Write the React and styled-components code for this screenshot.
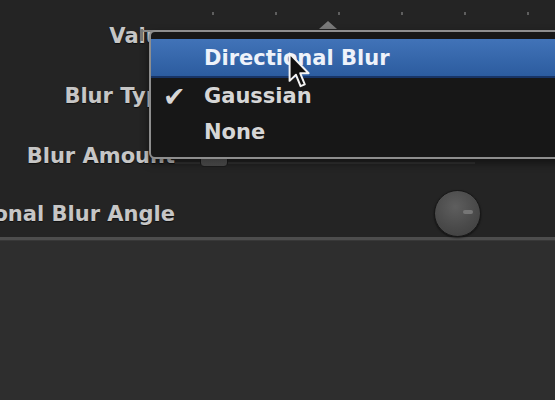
import React from 'react';
import styled, { createGlobalStyle } from 'styled-components';

const GlobalStyle = createGlobalStyle`
  html, body {
    margin: 0;
    padding: 0;
    background: #2d2d2d;
    overflow: hidden;
  }
`;

const Page = styled.div`
  position: relative;
  width: 555px;
  height: 400px;
  overflow: hidden;
  display: flex;
  flex-direction: column;
  font-family: "DejaVu Sans", "Liberation Sans", sans-serif;
  font-weight: bold;
  font-size: 21px;
`;

const Inspector = styled.div`
  padding-top: 6px;
  background: #242424;
  border-bottom: 3px solid #4d4d4d;
  height: 240px;
  box-sizing: border-box;
`;

const Row = styled.div`
  display: grid;
  grid-template-columns: 175px 1fr;
  height: ${(p) => p.h || 60}px;
  align-items: center;
`;

const Label = styled.div`
  display: flex;
  justify-content: flex-end;
  white-space: nowrap;
  color: #c6c6c6;
  text-shadow: 0 1px 1px rgba(0, 0, 0, 0.6);
`;

const Control = styled.div`
  display: flex;
  align-items: center;
  justify-content: ${(p) => p.justify || 'flex-start'};
  align-self: stretch;
  padding-right: ${(p) => p.padRight || 0}px;
`;

const ValueSlider = styled.div`
  position: relative;
  align-self: start;
  margin-left: -35px;
  width: 420px;
  padding-top: 6px;
`;

const Ticks = styled.div`
  display: flex;
  gap: 61px;
  padding-left: 72px;
  height: 3px;
`;

const Tick = styled.span`
  width: 2px;
  height: 3px;
  background: #5e5e5e;
`;

const Track = styled.div`
  position: relative;
  margin-top: 15px;
  height: 2px;
  background: #8a8a8a;
  border-left: 3px solid #9a9a9a;
  &::before {
    content: '';
    position: absolute;
    left: -3px;
    top: -1px;
    width: 3px;
    height: 12px;
    background: #777;
  }
`;

const Thumb = styled.div`
  position: absolute;
  left: 176px;
  top: -9px;
  width: 0;
  height: 0;
  border-left: 9px solid transparent;
  border-right: 9px solid transparent;
  border-bottom: 8px solid #7a7a7a;
`;

const AmountSlider = styled.div`
  position: relative;
  margin-top: 14px;
  width: 300px;
  height: 2px;
  background: #333;
`;

const AmountThumb = styled.div`
  position: absolute;
  left: 25px;
  top: -6px;
  width: 26px;
  height: 9px;
  border-radius: 0 0 4px 4px;
  background: linear-gradient(#6a6a6a, #4a4a4a);
  border: 1px solid #1c1c1c;
`;

const Knob = styled.div`
  position: relative;
  width: 45px;
  height: 45px;
  border-radius: 50%;
  border: 1px solid #161616;
  background: radial-gradient(circle at 45% 35%, #5e5e5e 0%, #4a4a4a 55%, #3c3c3c 100%);
  box-shadow: 0 1px 2px rgba(0, 0, 0, 0.6);
  &::after {
    content: '';
    position: absolute;
    right: 7px;
    top: 19px;
    width: 10px;
    height: 4px;
    border-radius: 2px;
    background: #767676;
  }
`;

const Empty = styled.div`
  flex: 1;
  background: #2e2e2e;
  border-top: 1px solid #383838;
`;

const Menu = styled.div`
  position: absolute;
  top: 30px;
  left: 149px;
  right: -20px;
  padding: 7px 0 7px;
  background: #171717;
  border: 2px solid #8e8e8e;
  border-radius: 6px;
  box-shadow: 0 4px 8px rgba(0, 0, 0, 0.5);
`;

const MenuItem = styled.div`
  display: grid;
  grid-template-columns: 53px 1fr;
  align-items: center;
  height: ${(p) => (p.active ? 39 : 36)}px;
  color: ${(p) => (p.active ? '#eef2fa' : '#d6d6d6')};
  background: ${(p) =>
    p.active ? 'linear-gradient(#4173b8, #2c5c9f)' : 'transparent'};
  border-bottom: ${(p) => (p.active ? '2px solid #173466' : '0')};
  box-sizing: border-box;
`;

const Check = styled.span`
  padding-left: 12px;
  font-size: 27px;
  line-height: 1;
`;

const Cursor = styled.svg`
  position: absolute;
  left: 288px;
  top: 52px;
`;

const valueTicks = [0, 1, 2, 3, 4, 5];

const menuItems = [
  { name: 'Directional Blur', active: true },
  { name: 'Gaussian', checked: true },
  { name: 'None' },
];

function App() {
  return (
    <Page>
      <GlobalStyle />
      <Inspector>
        <Row>
          <Label>Value</Label>
          <Control>
            <ValueSlider>
              <Ticks>
                {valueTicks.map((t) => (
                  <Tick key={t} />
                ))}
              </Ticks>
              <Track>
                <Thumb />
              </Track>
            </ValueSlider>
          </Control>
        </Row>
        <Row>
          <Label>Blur Type</Label>
          <Control />
        </Row>
        <Row>
          <Label>Blur Amount</Label>
          <Control>
            <AmountSlider>
              <AmountThumb />
            </AmountSlider>
          </Control>
        </Row>
        <Row h={55}>
          <Label>Directional Blur Angle</Label>
          <Control justify="flex-end" padRight={74}>
            <Knob />
          </Control>
        </Row>
      </Inspector>
      <Empty />

      <Menu>
        {menuItems.map((item) => (
          <MenuItem key={item.name} active={item.active}>
            <Check>{item.checked ? '✔' : ''}</Check>
            <span>{item.name}</span>
          </MenuItem>
        ))}
      </Menu>

      <Cursor width="26" height="38" viewBox="0 0 17 25">
        <path
          d="M1 1 L1 19 L5.2 15 L8.2 22.5 L11 21.3 L8 14 L13.5 14 Z"
          fill="#111"
          stroke="#f4f4f4"
          strokeWidth="1.3"
          strokeLinejoin="round"
        />
      </Cursor>
    </Page>
  );
}

export default App;
